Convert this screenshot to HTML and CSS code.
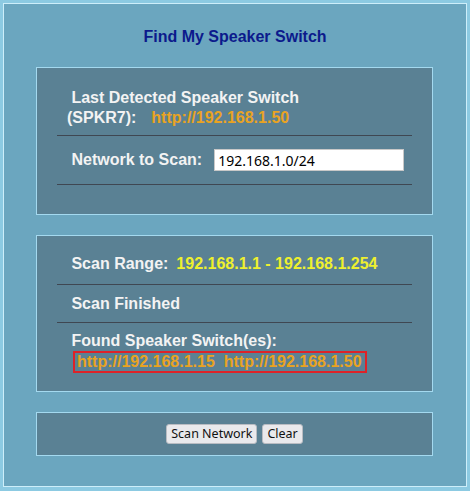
FILE: index.html
```html
<!DOCTYPE html>
<html>
<head>
<meta charset="utf-8">
<title>Find My Speaker Switch</title>
<link rel="stylesheet" href="styles.css">
</head>
<body>
<div class="frame">
  <h1 class="title">Find My Speaker Switch</h1>

  <section class="panel panel-detect">
    <div class="detect-text">
      <div class="line">&nbsp;Last Detected Speaker Switch</div>
      <div class="line">(SPKR7):<a class="link last-link" href="#">http://192.168.1.50</a></div>
    </div>
    <hr class="rule rule-a">
    <div class="scan-row">
      <label class="label" for="net">&nbsp;Network to Scan:</label>
      <input id="net" class="net-input" type="text" value="192.168.1.0/24">
    </div>
    <hr class="rule">
  </section>

  <section class="panel panel-status">
    <div class="line row-range">&nbsp;Scan Range:<span class="range">192.168.1.1 - 192.168.1.254</span></div>
    <hr class="rule rule-b">
    <div class="line row-finished">&nbsp;Scan Finished</div>
    <hr class="rule rule-c">
    <div class="line row-found">&nbsp;Found Speaker Switch(es):</div>
    <div class="found-box"><a class="link" href="#">http://192.168.1.15</a>&nbsp;&nbsp;<a class="link" href="#">http://192.168.1.50</a></div>
  </section>

  <section class="panel panel-actions">
    <button class="btn" type="button">Scan Network</button>
    <button class="btn" type="button">Clear</button>
  </section>
</div>
</body>
</html>
```

FILE: styles.css
```css
html, body {
  margin: 0;
  padding: 0;
}

body {
  background: #8ccae2;
  font-family: "Liberation Sans", Arial, sans-serif;
  padding: 3px;
}

.frame {
  border: 1px solid #cdeefa;
  background: #6ba6bf;
  padding: 24px 0 30px;
  display: flex;
  flex-direction: column;
}

.title {
  margin: 0 0 21px;
  font-size: 16px;
  line-height: 18px;
  font-weight: bold;
  color: #0c1a8c;
  text-align: center;
}

.panel {
  margin-left: 32px;
  width: 397px;
  border: 1px solid #a4d9ef;
  background: #5a8194;
  padding: 0 20px;
  box-sizing: border-box;
}

.panel + .panel {
  margin-top: 20px;
}

.line {
  font-size: 16px;
  font-weight: bold;
  line-height: 20px;
  color: #f3f3f3;
  padding-left: 10px;
  white-space: nowrap;
}

.link {
  color: #e9a322;
  text-decoration: none;
  font-weight: bold;
}

.panel-detect {
  padding-top: 20px;
  padding-bottom: 29px;
}

.last-link {
  margin-left: 15px;
}

.rule {
  border: 0;
  border-top: 1px solid #3f4752;
  height: 0;
  margin: 0;
}

.rule-a {
  margin-top: 7px;
}

.scan-row {
  height: 48px;
  display: flex;
  align-items: center;
  padding-left: 10px;
}

.label {
  font-size: 16px;
  font-weight: bold;
  line-height: 20px;
  color: #f3f3f3;
}

.net-input {
  margin: 0 0 0 12px;
  width: 190px;
  height: 22px;
  box-sizing: border-box;
  border: 1px solid #c8c8c8;
  background: #ffffff;
  padding: 0 3px;
  font-family: "Noto Sans", "DejaVu Sans", sans-serif;
  font-size: 14px;
  color: #000;
  outline: none;
}

.panel-status {
  padding-top: 18px;
  padding-bottom: 18px;
}

.range {
  color: #eef02e;
  margin-left: 8px;
}

.rule-b {
  margin-top: 10px;
}

.row-finished {
  margin-top: 9px;
}

.rule-c {
  margin-top: 8px;
}

.row-found {
  margin-top: 8px;
}

.found-box {
  display: inline-block;
  margin-left: 16px;
  border: 2px solid #de2228;
  height: 22px;
  box-sizing: border-box;
  padding: 0 3px 0 2px;
  font-size: 16px;
  line-height: 18px;
  white-space: nowrap;
}

.panel-actions {
  height: 44px;
  display: flex;
  align-items: center;
  justify-content: center;
  gap: 5px;
}

.btn {
  height: 20px;
  margin: 0;
  padding: 0 4px;
  font-family: "Noto Sans", "DejaVu Sans", sans-serif;
  font-size: 12.5px;
  line-height: 18px;
  color: #111;
  background: #e9e9ec;
  border: 1px solid #b9bcc2;
  border-radius: 3px;
}
```
